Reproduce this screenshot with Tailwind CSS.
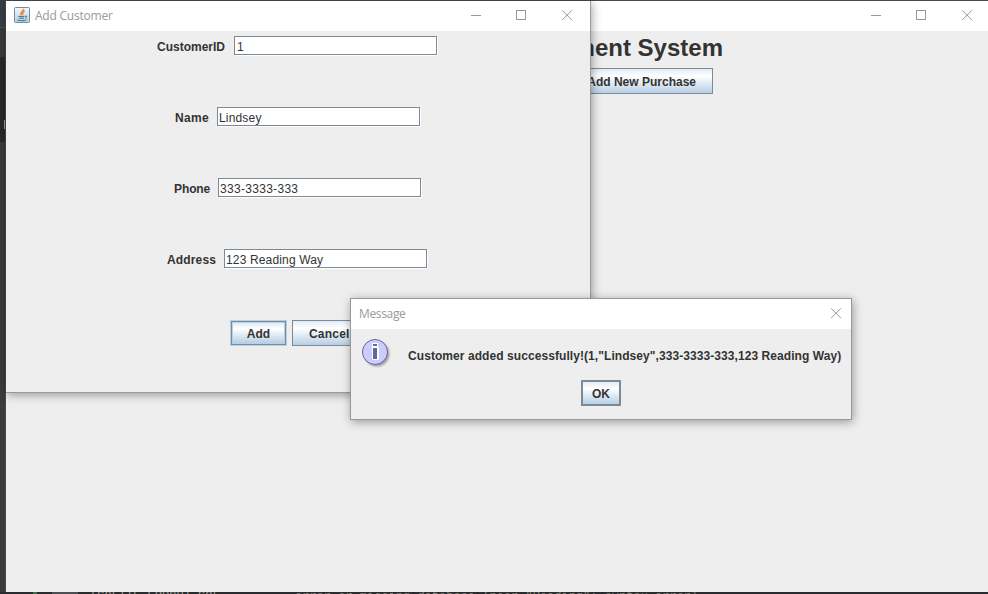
<!DOCTYPE html>
<html lang="en">
<head>
<meta charset="utf-8">
<title>Add Customer</title>
<script src="https://cdn.jsdelivr.net/npm/@tailwindcss/browser@4"></script>
</head>
<body class="relative w-[988px] h-[594px] overflow-hidden bg-[#35393b] font-['Liberation_Sans',Arial,sans-serif] text-[12px] leading-[14px] text-[#333333]">
<!-- editor behind the windows -->
<div class="absolute left-0 top-0 w-[6px] h-[594px] flex flex-col bg-[#383c3f]">
  <div class="h-[28px] bg-[#3b3e40] border-b border-[#505254]"></div>
  <div class="h-[29px] bg-[#393b3d]"></div>
  <div class="h-[85px] bg-[#27292b] pt-[63px] pl-[4px]"><div class="w-px h-[9px] bg-[#999999]"></div></div>
</div>
<div class="absolute left-0 top-[592px] w-[988px] h-[2px] overflow-hidden bg-[#292b2c]">
  <div class="absolute left-[33px] top-0 w-[4px] h-[2px] bg-[#3c7046]"></div>
  <div class="absolute left-[52px] top-0 w-[26px] h-[2px] bg-[#4c4e50]"></div>
  <div class="absolute left-[90px] top-[-1px] font-['Liberation_Mono',monospace] text-[12px] leading-[12px] text-[#a0a09a] whitespace-pre">[SQLITE_ERROR] SQL</div>
  <div class="absolute left-[295px] top-[-1px] font-['Liberation_Mono',monospace] text-[12px] leading-[12px] text-[#85857c] whitespace-pre">error or missing database (near "Reading": syntax error)</div>
</div>

<!-- main window -->
<section class="absolute left-[5px] top-0 w-[983px] h-[592px] border-l border-t border-[#4a4a4c] bg-[#eeeeee]">
  <header class="h-[30px] bg-white flex justify-end items-start pt-[9px] pr-[14px]">
    <svg class="w-[103px] h-[11px]" viewBox="0 0 103 11" fill="none" stroke="#999999" shape-rendering="crispEdges"><path d="M0 5.5H10"/><rect x="45.5" y=".5" width="9" height="9"/><path d="M91 .2L101 10.2M101 .2L91 10.2" shape-rendering="auto"/></svg>
  </header>
  <div class="w-[717px] flex flex-col items-end">
    <h1 class="mt-[3px] h-[28px] text-[24px] leading-[28px] font-bold whitespace-nowrap">Management System</h1>
    <div class="mt-[6px] mr-[10px] w-[140px] h-[26px] border border-[#7a8a99] bg-linear-to-b from-[#e2ecf5] via-white via-30% to-[#b8cfe5] font-bold flex items-center justify-end pt-[2px] pr-[16px] whitespace-nowrap">Add New Purchase</div>
  </div>
</section>

<!-- customer form -->
<section class="absolute left-[6px] top-[1px] w-[585px] h-[392px] border-r border-b border-[#999999] bg-[#eeeeee] shadow-[1px_2px_9px_rgba(0,0,0,0.36)]">
  <header class="h-[30px] bg-white flex items-start pl-[8px] pr-[17px]">
    <svg class="w-[16px] h-[16px] mt-[6px]" viewBox="0 0 16 16" fill="none">
      <defs><linearGradient id="jg" x2="0" y2="1"><stop stop-color="#f5f8fa"/><stop offset="1" stop-color="#b9cfde"/></linearGradient></defs>
      <rect x=".5" y=".5" width="15" height="15" rx="1" fill="url(#jg)" stroke="#6f8ea5"/>
      <path d="M9.8 1.8C10 4.2 5 4.9 7.6 8.1M10.8 4.1C8.3 5 8.2 6.2 9.2 8" stroke="#e98332" stroke-width="1.3"/>
      <path d="M4.2 9.4H10.5M5 11.2H10M11 9.2C13.4 8.5 13.3 10.8 11.1 11.2M3.2 12.9C5 13.9 10.7 13.9 12.6 12.8" stroke="#3e6d91" stroke-width="1"/>
    </svg>
    <span class="ml-[5px] mt-[8px] grow font-['Open_Sans','Noto_Sans',sans-serif] text-[12px] tracking-[-0.22px] text-[#999999]">Add Customer</span>
    <svg class="w-[102px] h-[11px] mt-[9px]" viewBox="0 0 102 11" fill="none" stroke="#999999" shape-rendering="crispEdges"><path d="M0 5.5H10"/><rect x="45.5" y=".5" width="9" height="9"/><path d="M91 .2L101 10.2M101 .2L91 10.2" shape-rendering="auto"/></svg>
  </header>
  <div class="pt-[5px] flex flex-col">
    <div class="h-[71px] flex items-start pl-[151px]"><label class="w-[77px] pt-[4px] font-bold">CustomerID</label><div class="w-[203px] h-[19px] border border-[#7a8a99] bg-white pl-[2px] pt-[3px] shadow-[1px_1px_0_#ffffff]">1</div></div>
    <div class="h-[71px] flex items-start pl-[169px]"><label class="w-[42px] pt-[4px] font-bold tracking-[0.3px]">Name</label><div class="w-[203px] h-[19px] border border-[#7a8a99] bg-white pl-[1px] pt-[3px] shadow-[1px_1px_0_#ffffff] tracking-[0.17px]">Lindsey</div></div>
    <div class="h-[71px] flex items-start pl-[168px]"><label class="w-[44px] pt-[4px] font-bold tracking-[-0.1px]">Phone</label><div class="w-[203px] h-[19px] border border-[#7a8a99] bg-white pl-[1px] pt-[3px] shadow-[1px_1px_0_#ffffff] tracking-[0.3px]">333-3333-333</div></div>
    <div class="h-[71px] flex items-start pl-[161px]"><label class="w-[57px] pt-[4px] font-bold tracking-[0.15px]">Address</label><div class="w-[203px] h-[19px] border border-[#7a8a99] bg-white pl-[1px] pt-[3px] shadow-[1px_1px_0_#ffffff] tracking-[0.15px]">123 Reading Way</div></div>
    <div class="flex pl-[224px] gap-[5px] font-bold">
      <div class="w-[57px] h-[26px] border border-[#b8cfe5] bg-[#7a8a99] p-px"><div class="w-full h-full border border-[#b8cfe5] bg-linear-to-b from-[#e2ecf5] via-white via-30% to-[#b8cfe5] flex items-center justify-center pt-[2px]">Add</div></div>
      <div class="w-[75px] h-[26px] border border-[#7a8a99] bg-linear-to-b from-[#e2ecf5] via-white via-30% to-[#b8cfe5] flex items-center pt-[2px] pl-[16px] tracking-[0.2px]">Cancel</div>
    </div>
  </div>
</section>

<!-- message dialog -->
<section class="absolute left-[350px] top-[298px] w-[502px] h-[122px] border border-[#999999] bg-[#eeeeee] shadow-[1px_2px_9px_rgba(0,0,0,0.36)]">
  <header class="h-[30px] bg-white flex items-start justify-between pl-[8px] pr-[9px]">
    <span class="mt-[8px] font-['Open_Sans','Noto_Sans',sans-serif] text-[12px] tracking-[-0.35px] text-[#999999]">Message</span>
    <svg class="w-[11px] h-[11px] mt-[9px]" viewBox="0 0 11 11" fill="none" stroke="#999999"><path d="M0 .2L10 10.2M10 .2L0 10.2"/></svg>
  </header>
  <div class="flex items-start pl-[10px] pt-[9px] h-[51px]">
    <svg class="w-[32px] h-[32px] shrink-0" viewBox="0 0 32 32">
      <defs><filter id="b" x="-30%" y="-30%" width="160%" height="160%"><feGaussianBlur stdDeviation="1.3"/></filter></defs>
      <circle cx="16" cy="16" r="12.3" fill="#000000" opacity=".35" filter="url(#b)"/>
      <circle cx="14" cy="14" r="12.5" fill="#ccccff" stroke="#666699"/>
      <path d="M11 5H17V9H18V22H11V9H11Z" fill="#ffffff"/>
      <path d="M12 6H16V8H12ZM12 10H16V21H12Z" fill="#666699"/>
    </svg>
    <p class="ml-[15px] mt-[11px] font-bold whitespace-nowrap tracking-[0.07px]">Customer added successfully!(1,"Lindsey",333-3333-333,123 Reading Way)</p>
  </div>
  <div class="flex justify-center"><div class="w-[40px] h-[26px] border-2 border-[#7a8a99] bg-linear-to-b from-[#e2ecf5] via-white via-30% to-[#b8cfe5] font-bold flex items-center justify-center pt-[2px]">OK</div></div>
</section>
</body>
</html>
